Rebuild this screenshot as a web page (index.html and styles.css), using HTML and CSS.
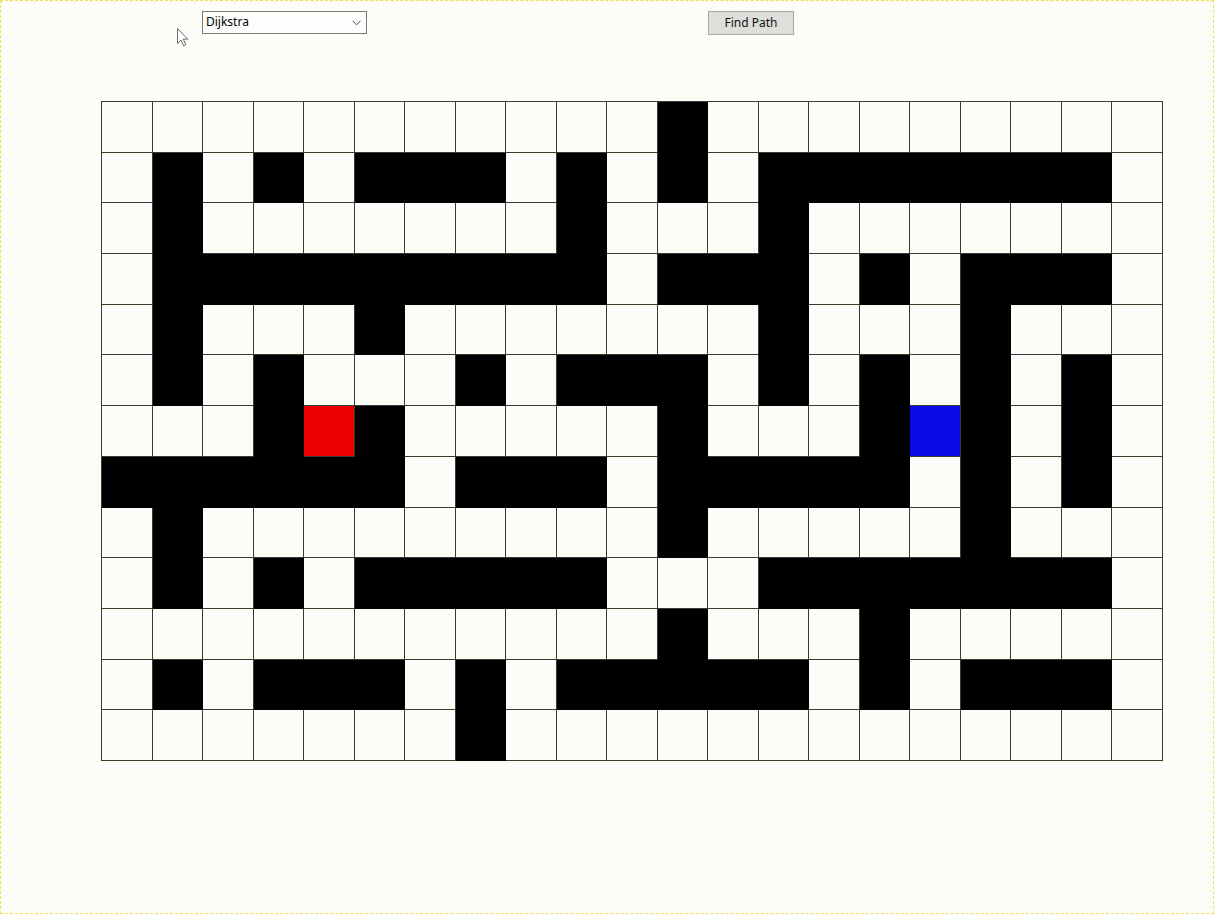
FILE: index.html
```html
<!DOCTYPE html>
<html>
<head>
<meta charset="utf-8">
<title>Path Finder</title>
<link rel="stylesheet" href="styles.css">
</head>
<body>
<div class="page">
  <div class="toolbar">
    <div class="select">
      <span>Dijkstra</span>
      <svg class="chev" width="9" height="6" viewBox="0 0 9 6"><path d="M0.5 0.8 L4.5 4.8 L8.5 0.8" fill="none" stroke="#4a4a4a" stroke-width="1"/></svg>
    </div>
    <button class="btn">Find Path</button>
  </div>
  <svg class="cursor" width="12" height="19" viewBox="0 0 12 19"><path d="M0.5 0.5 L0.5 15.5 L4 12 L6.6 17.8 L8.8 16.8 L6.3 11.2 L10.8 11.2 Z" fill="#ffffff" stroke="#6a6a6a" stroke-width="1" stroke-linejoin="round"/></svg>
  <div class="grid">
    <div class="c"></div><div class="c"></div><div class="c"></div><div class="c"></div><div class="c"></div><div class="c"></div><div class="c"></div><div class="c"></div><div class="c"></div><div class="c"></div><div class="c"></div><div class="c w"></div><div class="c"></div><div class="c"></div><div class="c"></div><div class="c"></div><div class="c"></div><div class="c"></div><div class="c"></div><div class="c"></div><div class="c"></div>
    <div class="c"></div><div class="c w"></div><div class="c"></div><div class="c w"></div><div class="c"></div><div class="c w"></div><div class="c w"></div><div class="c w"></div><div class="c"></div><div class="c w"></div><div class="c"></div><div class="c w"></div><div class="c"></div><div class="c w"></div><div class="c w"></div><div class="c w"></div><div class="c w"></div><div class="c w"></div><div class="c w"></div><div class="c w"></div><div class="c"></div>
    <div class="c"></div><div class="c w"></div><div class="c"></div><div class="c"></div><div class="c"></div><div class="c"></div><div class="c"></div><div class="c"></div><div class="c"></div><div class="c w"></div><div class="c"></div><div class="c"></div><div class="c"></div><div class="c w"></div><div class="c"></div><div class="c"></div><div class="c"></div><div class="c"></div><div class="c"></div><div class="c"></div><div class="c"></div>
    <div class="c"></div><div class="c w"></div><div class="c w"></div><div class="c w"></div><div class="c w"></div><div class="c w"></div><div class="c w"></div><div class="c w"></div><div class="c w"></div><div class="c w"></div><div class="c"></div><div class="c w"></div><div class="c w"></div><div class="c w"></div><div class="c"></div><div class="c w"></div><div class="c"></div><div class="c w"></div><div class="c w"></div><div class="c w"></div><div class="c"></div>
    <div class="c"></div><div class="c w"></div><div class="c"></div><div class="c"></div><div class="c"></div><div class="c w"></div><div class="c"></div><div class="c"></div><div class="c"></div><div class="c"></div><div class="c"></div><div class="c"></div><div class="c"></div><div class="c w"></div><div class="c"></div><div class="c"></div><div class="c"></div><div class="c w"></div><div class="c"></div><div class="c"></div><div class="c"></div>
    <div class="c"></div><div class="c w"></div><div class="c"></div><div class="c w"></div><div class="c"></div><div class="c"></div><div class="c"></div><div class="c w"></div><div class="c"></div><div class="c w"></div><div class="c w"></div><div class="c w"></div><div class="c"></div><div class="c w"></div><div class="c"></div><div class="c w"></div><div class="c"></div><div class="c w"></div><div class="c"></div><div class="c w"></div><div class="c"></div>
    <div class="c"></div><div class="c"></div><div class="c"></div><div class="c w"></div><div class="c s"></div><div class="c w"></div><div class="c"></div><div class="c"></div><div class="c"></div><div class="c"></div><div class="c"></div><div class="c w"></div><div class="c"></div><div class="c"></div><div class="c"></div><div class="c w"></div><div class="c e"></div><div class="c w"></div><div class="c"></div><div class="c w"></div><div class="c"></div>
    <div class="c w"></div><div class="c w"></div><div class="c w"></div><div class="c w"></div><div class="c w"></div><div class="c w"></div><div class="c"></div><div class="c w"></div><div class="c w"></div><div class="c w"></div><div class="c"></div><div class="c w"></div><div class="c w"></div><div class="c w"></div><div class="c w"></div><div class="c w"></div><div class="c"></div><div class="c w"></div><div class="c"></div><div class="c w"></div><div class="c"></div>
    <div class="c"></div><div class="c w"></div><div class="c"></div><div class="c"></div><div class="c"></div><div class="c"></div><div class="c"></div><div class="c"></div><div class="c"></div><div class="c"></div><div class="c"></div><div class="c w"></div><div class="c"></div><div class="c"></div><div class="c"></div><div class="c"></div><div class="c"></div><div class="c w"></div><div class="c"></div><div class="c"></div><div class="c"></div>
    <div class="c"></div><div class="c w"></div><div class="c"></div><div class="c w"></div><div class="c"></div><div class="c w"></div><div class="c w"></div><div class="c w"></div><div class="c w"></div><div class="c w"></div><div class="c"></div><div class="c"></div><div class="c"></div><div class="c w"></div><div class="c w"></div><div class="c w"></div><div class="c w"></div><div class="c w"></div><div class="c w"></div><div class="c w"></div><div class="c"></div>
    <div class="c"></div><div class="c"></div><div class="c"></div><div class="c"></div><div class="c"></div><div class="c"></div><div class="c"></div><div class="c"></div><div class="c"></div><div class="c"></div><div class="c"></div><div class="c w"></div><div class="c"></div><div class="c"></div><div class="c"></div><div class="c w"></div><div class="c"></div><div class="c"></div><div class="c"></div><div class="c"></div><div class="c"></div>
    <div class="c"></div><div class="c w"></div><div class="c"></div><div class="c w"></div><div class="c w"></div><div class="c w"></div><div class="c"></div><div class="c w"></div><div class="c"></div><div class="c w"></div><div class="c w"></div><div class="c w"></div><div class="c w"></div><div class="c w"></div><div class="c"></div><div class="c w"></div><div class="c"></div><div class="c w"></div><div class="c w"></div><div class="c w"></div><div class="c"></div>
    <div class="c"></div><div class="c"></div><div class="c"></div><div class="c"></div><div class="c"></div><div class="c"></div><div class="c"></div><div class="c w"></div><div class="c"></div><div class="c"></div><div class="c"></div><div class="c"></div><div class="c"></div><div class="c"></div><div class="c"></div><div class="c"></div><div class="c"></div><div class="c"></div><div class="c"></div><div class="c"></div><div class="c"></div>
  </div>
</div>
</body>
</html>
```

FILE: styles.css
```css
html, body {
  margin: 0;
  padding: 0;
  background: #fdfdfc;
}

.page {
  position: relative;
  width: 1214px;
  height: 914px;
  box-sizing: border-box;
  border: 1px dashed #eee25a;
  padding-top: 10px;
  font-family: "Noto Sans", "Open Sans", sans-serif;
  background-color: #fdfdfc;
  background-image: radial-gradient(circle at 1px 1px, #faf6b4 0.6px, transparent 0.9px);
  background-size: 8px 8px;
}

.toolbar {
  display: flex;
  align-items: flex-start;
  padding-left: 201px;
  height: 25px;
}

.select {
  width: 165px;
  height: 23px;
  box-sizing: border-box;
  border: 1px solid #7a7a7a;
  background: #fdfdfc;
  display: flex;
  align-items: center;
  justify-content: space-between;
  padding: 0 5px 0 3px;
  font-size: 12px;
  color: #000;
}

.select span {
  line-height: 20px;
  margin-top: -1px;
}

.chev {
  display: block;
  margin-top: 1px;
}

.btn {
  margin-left: 341px;
  width: 86px;
  height: 24px;
  box-sizing: border-box;
  border: 1px solid #a8a8a4;
  background: #dededa;
  font-family: "Noto Sans", "Open Sans", sans-serif;
  font-size: 12px;
  color: #111;
  padding: 0;
  line-height: 20px;
}

.cursor {
  position: absolute;
  left: 176px;
  top: 27px;
}

.grid {
  margin: 65px 0 0 100px;
  width: 1062px;
  height: 660px;
  box-sizing: border-box;
  border-left: 1px solid #3a3a34;
  border-top: 1px solid #3a3a34;
  display: grid;
  grid-template-columns: repeat(21, 1fr);
  grid-template-rows: repeat(13, 1fr);
}

.c {
  box-sizing: border-box;
  border-right: 1px solid #3a3a34;
  border-bottom: 1px solid #3a3a34;
}

.c.w {
  background: #000;
  border-color: #000;
}

.c.s {
  background: #ec0000;
  border-color: #3a3a34;
}

.c.e {
  background: #0a0ae6;
  border-color: #3a3a34;
}
```
